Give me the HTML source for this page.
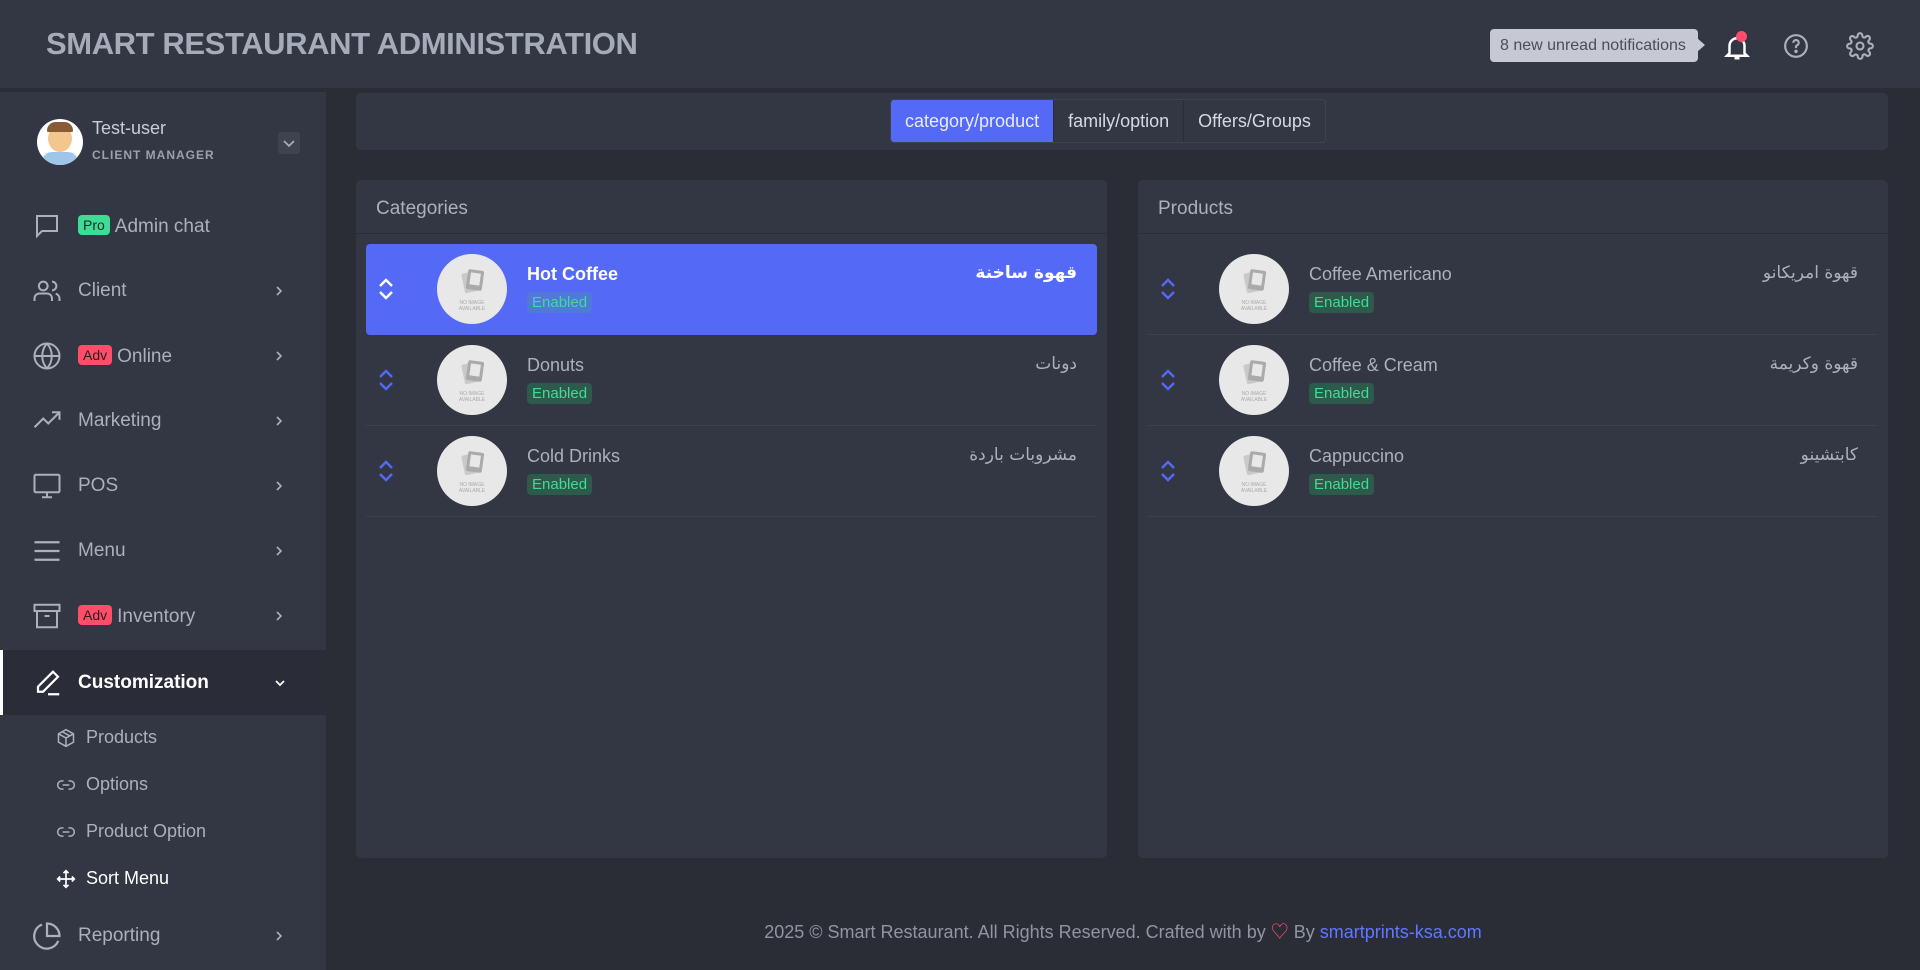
<!DOCTYPE html>
<html><head><meta charset="utf-8"><style>
*{box-sizing:border-box;margin:0;padding:0}
body{width:1920px;height:970px;background:#2a2d36;font-family:"Liberation Sans","Noto Sans CJK SC",sans-serif;color:#aab0bd;position:relative;overflow:hidden}
.hdr{position:absolute;left:0;top:0;width:1920px;height:90px;background:#333743;border-bottom:2px solid #2a2d36}
.title{position:absolute;left:46px;top:26px;font-size:31px;font-weight:bold;color:#a5abb8;letter-spacing:-0.4px}
.side{position:absolute;left:0;top:92px;width:326px;height:878px;background:#333743}
.abs{position:absolute}
.mi{position:absolute;left:0;width:326px;height:64px;display:flex;align-items:center;font-size:19px;color:#aab0bd}
.mi .ic{position:absolute;left:32px;width:30px;height:30px}
.mi .tx{position:absolute;left:78px}
.mi .chev{position:absolute;left:272px;width:14px;height:14px}
.badge{display:inline-block;font-size:14px;padding:2px 5px;border-radius:4px;margin-right:5px;vertical-align:2px}
.sub{position:absolute;left:56px;font-size:18px;color:#aab0bd;display:flex;align-items:center}
.sub svg{width:20px;height:20px;margin-right:10px}
.card{position:absolute;background:#333743;border-radius:5px}
.tabs{position:absolute;left:890px;top:99px;height:44px;display:flex;border:1px solid #3f4350;border-radius:4px;overflow:hidden}
.tabs div{padding:0 14px;line-height:42px;font-size:18px;color:#d5d9e2;border-left:1px solid #2a2d36}
.tabs div.on{background:#5469f5;border-left:none;color:#e8ebff}
.ch{position:absolute;left:20px;top:18px;font-size:19px;color:#aab0bd}
.cdiv{position:absolute;left:0;right:0;top:53px;height:1px;background:#2a2d36}
.row{position:absolute;left:10px;right:10px;height:91px;border-bottom:1px solid #3d414d}
.row.on{background:#5469f5;border-radius:4px;border-bottom:none}
.row .arr{position:absolute;left:10px;top:31px;width:20px;height:28px}
.row .img{position:absolute;left:71px;top:10px;width:70px;height:70px;border-radius:50%;background:#e8e8e8}
.row .nm{position:absolute;left:161px;top:20px;font-size:18px;color:#aab0bd}
.row.on .nm{color:#fff;font-weight:bold}
.row .st{position:absolute;left:161px;top:48px;font-size:15px;color:#3ddc97;background:#2d5a4b;padding:2px 5px;border-radius:4px}
.row.on .st{background:#4f7ad8}
.row .ar{position:absolute;right:20px;top:19px;font-size:17px;color:#aab0bd;direction:rtl;font-family:"DejaVu Sans",sans-serif}
.row.on .ar{color:#fff;font-weight:bold}
.foot{position:absolute;left:326px;width:1594px;top:918px;text-align:center;font-size:18px;color:#8f96a3}
</style></head><body>
<div class="hdr"><div class="title">SMART RESTAURANT ADMINISTRATION</div>
<div class="abs" style="left:1490px;top:29px;width:208px;height:33px;background:#c6c9d3;border-radius:4px;font-size:16px;color:#4a4e5a;line-height:33px;padding-left:10px">8 new unread notifications</div>
<div class="abs" style="left:1697px;top:38px;width:0;height:0;border-top:7px solid transparent;border-bottom:7px solid transparent;border-left:8px solid #c6c9d3"></div>
<svg class="abs" style="left:1722px;top:32px" width="30" height="30" viewBox="0 0 24 24" fill="none" stroke="#fff" stroke-width="2"><path d="M6 17V11a6 6 0 0 1 12 0v6l2 2H4z"/><path d="M10 21h4"/></svg>
<div class="abs" style="left:1736px;top:31px;width:11px;height:11px;border-radius:50%;background:#ff4d6a"></div>
<svg class="abs" style="left:1783px;top:33px" width="26" height="26" viewBox="0 0 24 24" fill="none" stroke="#aab0bd" stroke-width="2"><circle cx="12" cy="12" r="10"/><path d="M9.5 9a2.5 2.5 0 1 1 3.5 2.3c-.6.3-1 .8-1 1.5V14"/><circle cx="12" cy="17" r=".6" fill="#aab0bd"/></svg>
<svg class="abs" style="left:1846px;top:32px" width="28" height="28" viewBox="0 0 24 24" fill="none" stroke="#aab0bd" stroke-width="1.8"><circle cx="12" cy="12" r="3"/><path d="M19.4 15a1.7 1.7 0 0 0 .3 1.8l.1.1a2 2 0 1 1-2.8 2.8l-.1-.1a1.7 1.7 0 0 0-1.8-.3 1.7 1.7 0 0 0-1 1.5V21a2 2 0 1 1-4 0v-.1a1.7 1.7 0 0 0-1.1-1.5 1.7 1.7 0 0 0-1.8.3l-.1.1a2 2 0 1 1-2.8-2.8l.1-.1a1.7 1.7 0 0 0 .3-1.8 1.7 1.7 0 0 0-1.500-1H3a2 2 0 1 1 0-4h.1a1.7 1.7 0 0 0 1.5-1.1 1.7 1.7 0 0 0-.3-1.8l-.1-.1a2 2 0 1 1 2.8-2.8l.1.1a1.7 1.7 0 0 0 1.8.3H9a1.7 1.7 0 0 0 1-1.5V3a2 2 0 1 1 4 0v.1a1.7 1.7 0 0 0 1 1.5 1.7 1.7 0 0 0 1.8-.3l.1-.1a2 2 0 1 1 2.8 2.8l-.1.1a1.7 1.7 0 0 0-.3 1.8V9a1.7 1.7 0 0 0 1.5 1H21a2 2 0 1 1 0 4h-.1a1.7 1.7 0 0 0-1.5 1z"/></svg>
</div>

<div class="side">
<div class="abs" style="left:37px;top:27px;width:46px;height:46px;border-radius:50%;background:#fff;overflow:hidden">
<div class="abs" style="left:11px;top:6px;width:24px;height:27px;border-radius:50%;background:#f2c68c"></div>
<div class="abs" style="left:10px;top:3px;width:26px;height:10px;border-radius:12px 12px 2px 2px;background:#8a5a34"></div>
<div class="abs" style="left:5px;top:33px;width:36px;height:16px;border-radius:10px 10px 0 0;background:#9fc6e8"></div></div>
<div class="abs" style="left:92px;top:26px;font-size:18px;color:#c9cdd6">Test-user</div>
<div class="abs" style="left:92px;top:56px;font-size:12px;color:#9aa0ad;letter-spacing:1px;font-weight:bold">CLIENT MANAGER</div>
<div class="abs" style="left:278px;top:40px;width:22px;height:22px;background:#3f4350;border-radius:3px"><svg width="22" height="22" viewBox="0 0 22 22" fill="none" stroke="#aab0bd" stroke-width="1.6"><path d="M6 9l5 5 5-5"/></svg></div>
</div>

<div class="mi" style="top:194px"><svg class="ic" viewBox="0 0 24 24" fill="none" stroke="#aab0bd" stroke-width="1.6"><path d="M4 4h16v12H8l-4 4z"/></svg><span class="tx"><span class="badge" style="background:#3ddc97;color:#1e2a25">Pro</span>Admin chat</span></div>
<div class="mi" style="top:259px"><svg class="ic" viewBox="0 0 24 24" fill="none" stroke="#aab0bd" stroke-width="1.6"><circle cx="9" cy="8" r="3.5"/><path d="M2 20v-2a4 4 0 0 1 4-4h6a4 4 0 0 1 4 4v2M16 4.5a3.5 3.5 0 0 1 0 7M22 20v-2a4 4 0 0 0-3-3.8"/></svg><span class="tx">Client</span><svg class="chev" viewBox="0 0 14 14" fill="none" stroke="#aab0bd" stroke-width="1.6"><path d="M5 3l4 4-4 4"/></svg></div>
<div class="mi" style="top:324px"><svg class="ic" viewBox="0 0 24 24" fill="none" stroke="#aab0bd" stroke-width="1.6"><circle cx="12" cy="12" r="10"/><path d="M2 12h20M12 2a15 15 0 0 1 0 20M12 2a15 15 0 0 0 0 20"/></svg><span class="tx"><span class="badge" style="background:#ff4d6a;color:#2a1a1e">Adv</span>Online</span><svg class="chev" viewBox="0 0 14 14" fill="none" stroke="#aab0bd" stroke-width="1.6"><path d="M5 3l4 4-4 4"/></svg></div>
<div class="mi" style="top:389px"><svg class="ic" viewBox="0 0 24 24" fill="none" stroke="#aab0bd" stroke-width="1.6"><path d="M2 17l7-7 4 4 9-9M16 5h6v6"/></svg><span class="tx">Marketing</span><svg class="chev" viewBox="0 0 14 14" fill="none" stroke="#aab0bd" stroke-width="1.6"><path d="M5 3l4 4-4 4"/></svg></div>
<div class="mi" style="top:454px"><svg class="ic" viewBox="0 0 24 24" fill="none" stroke="#aab0bd" stroke-width="1.6"><rect x="2" y="3" width="20" height="14" rx="1"/><path d="M8 21h8M12 17v4"/></svg><span class="tx">POS</span><svg class="chev" viewBox="0 0 14 14" fill="none" stroke="#aab0bd" stroke-width="1.6"><path d="M5 3l4 4-4 4"/></svg></div>
<div class="mi" style="top:519px"><svg class="ic" viewBox="0 0 24 24" fill="none" stroke="#aab0bd" stroke-width="1.8"><path d="M2 5h20M2 12h20M2 19h20"/></svg><span class="tx">Menu</span><svg class="chev" viewBox="0 0 14 14" fill="none" stroke="#aab0bd" stroke-width="1.6"><path d="M5 3l4 4-4 4"/></svg></div>
<div class="mi" style="top:584px"><svg class="ic" viewBox="0 0 24 24" fill="none" stroke="#aab0bd" stroke-width="1.6"><rect x="2" y="3" width="20" height="5"/><path d="M4 8v13h16V8M10 12h4"/></svg><span class="tx"><span class="badge" style="background:#ff4d6a;color:#2a1a1e">Adv</span>Inventory</span><svg class="chev" viewBox="0 0 14 14" fill="none" stroke="#aab0bd" stroke-width="1.6"><path d="M5 3l4 4-4 4"/></svg></div>
<div class="mi" style="top:650px;height:65px;background:#2a2d37;color:#fff;border-left:3px solid #fff;font-weight:bold"><svg class="ic" style="left:30px" viewBox="0 0 24 24" fill="none" stroke="#fff" stroke-width="1.8"><path d="M16 3l4 4L8 19H4v-4zM12 21h9"/></svg><span class="tx" style="left:75px">Customization</span><svg class="chev" style="left:270px" viewBox="0 0 14 14" fill="none" stroke="#fff" stroke-width="1.8"><path d="M3 5l4 4 4-4"/></svg></div>
<div class="sub" style="top:727px"><svg viewBox="0 0 24 24" fill="none" stroke="#aab0bd" stroke-width="1.8"><path d="M12 2l9 5v10l-9 5-9-5V7zM3 7l9 5 9-5M12 12v10M7.5 4.5l9 5"/></svg>Products</div>
<div class="sub" style="top:774px"><svg viewBox="0 0 24 24" fill="none" stroke="#aab0bd" stroke-width="1.8"><path d="M9 17H7a5 5 0 0 1 0-10h2M15 7h2a5 5 0 0 1 0 10h-2M8 12h8"/></svg>Options</div>
<div class="sub" style="top:821px"><svg viewBox="0 0 24 24" fill="none" stroke="#aab0bd" stroke-width="1.8"><path d="M9 17H7a5 5 0 0 1 0-10h2M15 7h2a5 5 0 0 1 0 10h-2M8 12h8"/></svg>Product Option</div>
<div class="sub" style="top:868px;color:#fff"><svg viewBox="0 0 24 24" fill="none" stroke="#fff" stroke-width="2"><path d="M12 2v20M2 12h20M9 5l3-3 3 3M9 19l3 3 3-3M5 9l-3 3 3 3M19 9l3 3-3 3"/></svg>Sort Menu</div>
<div class="mi" style="top:904px"><svg class="ic" viewBox="0 0 24 24" fill="none" stroke="#aab0bd" stroke-width="1.8"><path d="M21 15.9A10 10 0 1 1 8 2.8"/><path d="M22 12A10 10 0 0 0 12 2v10z"/></svg><span class="tx">Reporting</span><svg class="chev" viewBox="0 0 14 14" fill="none" stroke="#aab0bd" stroke-width="1.6"><path d="M5 3l4 4-4 4"/></svg></div>

<div class="card" style="left:356px;top:93px;width:1532px;height:57px"></div>
<div class="tabs"><div class="on">category/product</div><div>family/option</div><div>Offers/Groups</div></div>

<svg width="0" height="0" style="position:absolute"><defs>
<symbol id="ar" viewBox="0 0 20 28"><path d="M4 11l6-6 6 6M4 17l6 6 6-6" fill="none" stroke-width="2.4"/></symbol>
<symbol id="im" viewBox="0 0 70 70"><g fill="#c9c9c9"><rect x="26" y="18" width="16" height="20" rx="2" transform="rotate(-12 34 28)"/><rect x="30" y="16" width="16" height="20" rx="2" fill="#aaa" transform="rotate(8 38 26)"/><rect x="33" y="19" width="10" height="12" fill="#e8e8e8" transform="rotate(8 38 26)"/></g><text x="35" y="50" font-size="5" fill="#aaa" text-anchor="middle" font-family="Liberation Sans">NO IMAGE</text><text x="35" y="56" font-size="5" fill="#aaa" text-anchor="middle" font-family="Liberation Sans">AVAILABLE</text></symbol>
</defs></svg>

<div class="card" style="left:356px;top:180px;width:751px;height:678px">
<div class="ch">Categories</div><div class="cdiv"></div>
<div class="row on" style="top:64px"><svg class="arr" stroke="#fff"><use href="#ar"/></svg><svg class="img" viewBox="0 0 70 70"><use href="#im"/></svg><div class="nm">Hot Coffee</div><div class="st">Enabled</div><div class="ar">قهوة ساخنة</div></div>
<div class="row" style="top:155px"><svg class="arr" stroke="#5469f5"><use href="#ar"/></svg><svg class="img" viewBox="0 0 70 70"><use href="#im"/></svg><div class="nm">Donuts</div><div class="st">Enabled</div><div class="ar">دونات</div></div>
<div class="row" style="top:246px"><svg class="arr" stroke="#5469f5"><use href="#ar"/></svg><svg class="img" viewBox="0 0 70 70"><use href="#im"/></svg><div class="nm">Cold Drinks</div><div class="st">Enabled</div><div class="ar">مشروبات باردة</div></div>
</div>

<div class="card" style="left:1138px;top:180px;width:750px;height:678px">
<div class="ch">Products</div><div class="cdiv"></div>
<div class="row" style="top:64px"><svg class="arr" stroke="#5469f5"><use href="#ar"/></svg><svg class="img" viewBox="0 0 70 70"><use href="#im"/></svg><div class="nm">Coffee Americano</div><div class="st">Enabled</div><div class="ar">قهوة امريكانو</div></div>
<div class="row" style="top:155px"><svg class="arr" stroke="#5469f5"><use href="#ar"/></svg><svg class="img" viewBox="0 0 70 70"><use href="#im"/></svg><div class="nm">Coffee &amp; Cream</div><div class="st">Enabled</div><div class="ar">قهوة وكريمة</div></div>
<div class="row" style="top:246px"><svg class="arr" stroke="#5469f5"><use href="#ar"/></svg><svg class="img" viewBox="0 0 70 70"><use href="#im"/></svg><div class="nm">Cappuccino</div><div class="st">Enabled</div><div class="ar">كابتشينو</div></div>
</div>

<div class="foot">2025 © Smart Restaurant. All Rights Reserved. Crafted with by <span style="color:#ff4d6a">♡</span> By <span style="color:#5f78ff">smartprints-ksa.com</span></div>
</body></html>
